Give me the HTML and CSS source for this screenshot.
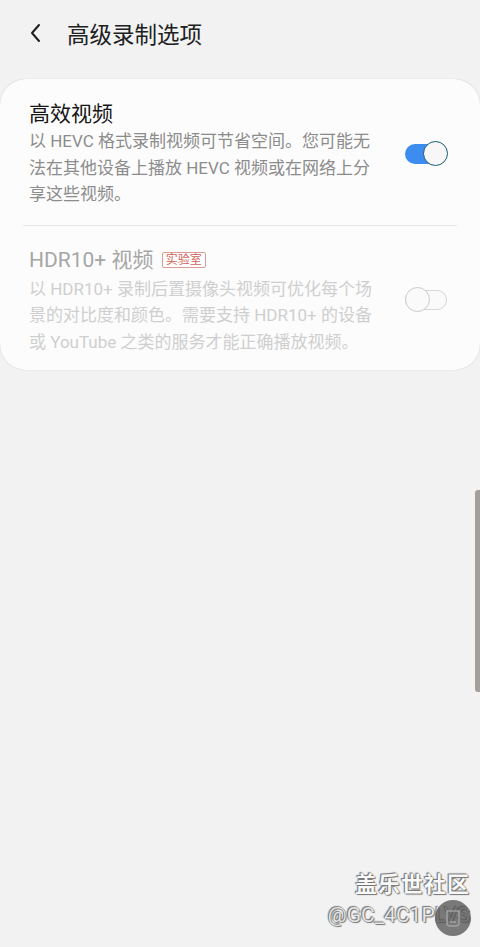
FILE: index.html
```html
<!DOCTYPE html>
<html lang="zh-CN">
  <head>
    <meta charset="UTF-8" />
    <meta name="viewport" content="width=device-width, initial-scale=1.0" />
    <title>高级录制选项</title>
    <link rel="stylesheet" href="styles.css">
  </head>
  <body>
    <div class="header">
      <svg class="back" width="14" height="20" viewBox="0 0 14 20">
        <polyline points="10,2 3,10 10,18" fill="none" stroke="#1e1e1e" stroke-width="2" stroke-linecap="round" stroke-linejoin="round" />
      </svg>
      <div class="title">高级录制选项</div>
    </div>

    <div class="card">
      <div class="row first">
        <div class="row-text">
          <div class="row-title">高效视频</div>
          <div class="row-desc">以 HEVC 格式录制视频可节省空间。您可能无法在其他设备上播放 HEVC 视频或在网络上分享这些视频。</div>
        </div>
        <div class="switch on">
          <span class="track"></span>
          <span class="thumb"></span>
        </div>
      </div>
      <div class="row disabled">
        <div class="row-text">
          <div class="row-title">HDR10+ 视频 <span class="badge">实验室</span></div>
          <div class="row-desc">以 HDR10+ 录制后置摄像头视频可优化每个场景的对比度和颜色。需要支持 HDR10+ 的设备或 YouTube 之类的服务才能正确播放视频。</div>
        </div>
        <div class="switch">
          <span class="track"></span>
          <span class="thumb"></span>
        </div>
      </div>
    </div>

    <div class="scrollbar"></div>

    <div class="watermark">
      <div class="wm-name">盖乐世社区</div>
      <div class="wm-user">@GC_4C1PLVS</div>
    </div>
    <div class="float-btn">
      <svg width="18" height="20" viewBox="0 0 18 20">
        <path d="M3 3 H15 V15 Q15 18 12 18 H6 Q3 18 3 15 Z" fill="none" stroke="#a0a0a0" stroke-width="1.6" />
        <line x1="6" y1="14" x2="12" y2="14" stroke="#a0a0a0" stroke-width="1.6" />
      </svg>
    </div>
  </body>
</html>
```

FILE: styles.css
```css
/* Camera settings page */
body {
  margin: 0;
  width: 480px;
  height: 947px;
  position: relative;
  overflow: hidden;
  background-color: #f2f2f2;
  font-family: Roboto, "Noto Sans CJK SC", sans-serif;
  color: #1e1e1e;
}
.header {
  display: flex;
  align-items: center;
  height: 66px;
  padding-left: 29px;
}
.header .back {
  display: block;
}
.header .title {
  margin-left: 24px;
  font-size: 22.5px;
  color: #202020;
}
.card {
  margin-top: 13px;
  padding: 0 23px;
  background-color: #fcfcfc;
  border-radius: 26px;
  box-shadow: 0 0 1px rgba(0, 0, 0, 0.25);
}
.row {
  display: flex;
  align-items: center;
  justify-content: space-between;
  padding: 21px 9px 17px 6px;
}
.row.first {
  border-bottom: 1px solid #e6e6e6;
}
.row.disabled {
  padding-top: 20px;
  padding-bottom: 15px;
}
.row-text {
  width: 348px;
}
.row-title {
  font-size: 21px;
  line-height: 28px;
  color: #161616;
}
.row-desc {
  font-size: 17px;
  line-height: 26.5px;
  color: #8c8c8c;
}
.disabled .row-title {
  color: #a6a6a6;
  margin-bottom: 2px;
}
.disabled .row-desc {
  color: #cfcfcf;
}
.badge {
  display: inline-block;
  vertical-align: 3px;
  margin-left: 3px;
  padding: 0 3px;
  font-size: 12px;
  line-height: 14px;
  color: #cf5f58;
  border: 1px solid #dc9a94;
  border-radius: 2px;
  background-color: #fff;
}
.switch {
  position: relative;
  width: 43px;
  height: 26px;
}
.switch .track {
  position: absolute;
  left: 0;
  top: 3px;
  width: 36px;
  height: 20px;
  border-radius: 10px;
  background-color: #3d8df0;
}
.switch .thumb {
  position: absolute;
  right: 0;
  top: 0;
  width: 23px;
  height: 23px;
  border-radius: 50%;
  border: 1.5px solid #1c5a78;
  background-color: #f7f7f7;
}
.switch:not(.on) .track {
  width: 40px;
  height: 18px;
  background-color: #fafafa;
  border: 1.5px solid #d6d6d6;
}
.switch:not(.on) .thumb {
  left: 0;
  right: auto;
  border-color: #cbcbcb;
  background-color: #fafafa;
}
.scrollbar {
  position: absolute;
  right: 0;
  top: 490px;
  width: 5px;
  height: 202px;
  border-radius: 3px 0 0 3px;
  background-color: #a59f9c;
}
.watermark {
  position: absolute;
  right: 10px;
  top: 870px;
  text-align: right;
  color: #f8f8f8;
  text-shadow: 0 0 1px #555, 1px 1px 1px #777, -1px -1px 1px #777;
}
.wm-name {
  font-size: 22px;
  font-weight: bold;
  line-height: 30px;
  letter-spacing: 1px;
}
.wm-user {
  font-size: 21px;
  line-height: 30px;
  color: #e8e8e8;
}
.float-btn {
  position: absolute;
  left: 435px;
  top: 900px;
  width: 36px;
  height: 36px;
  border-radius: 50%;
  background-color: rgba(80, 80, 80, 0.75);
  display: flex;
  align-items: center;
  justify-content: center;
}
```
